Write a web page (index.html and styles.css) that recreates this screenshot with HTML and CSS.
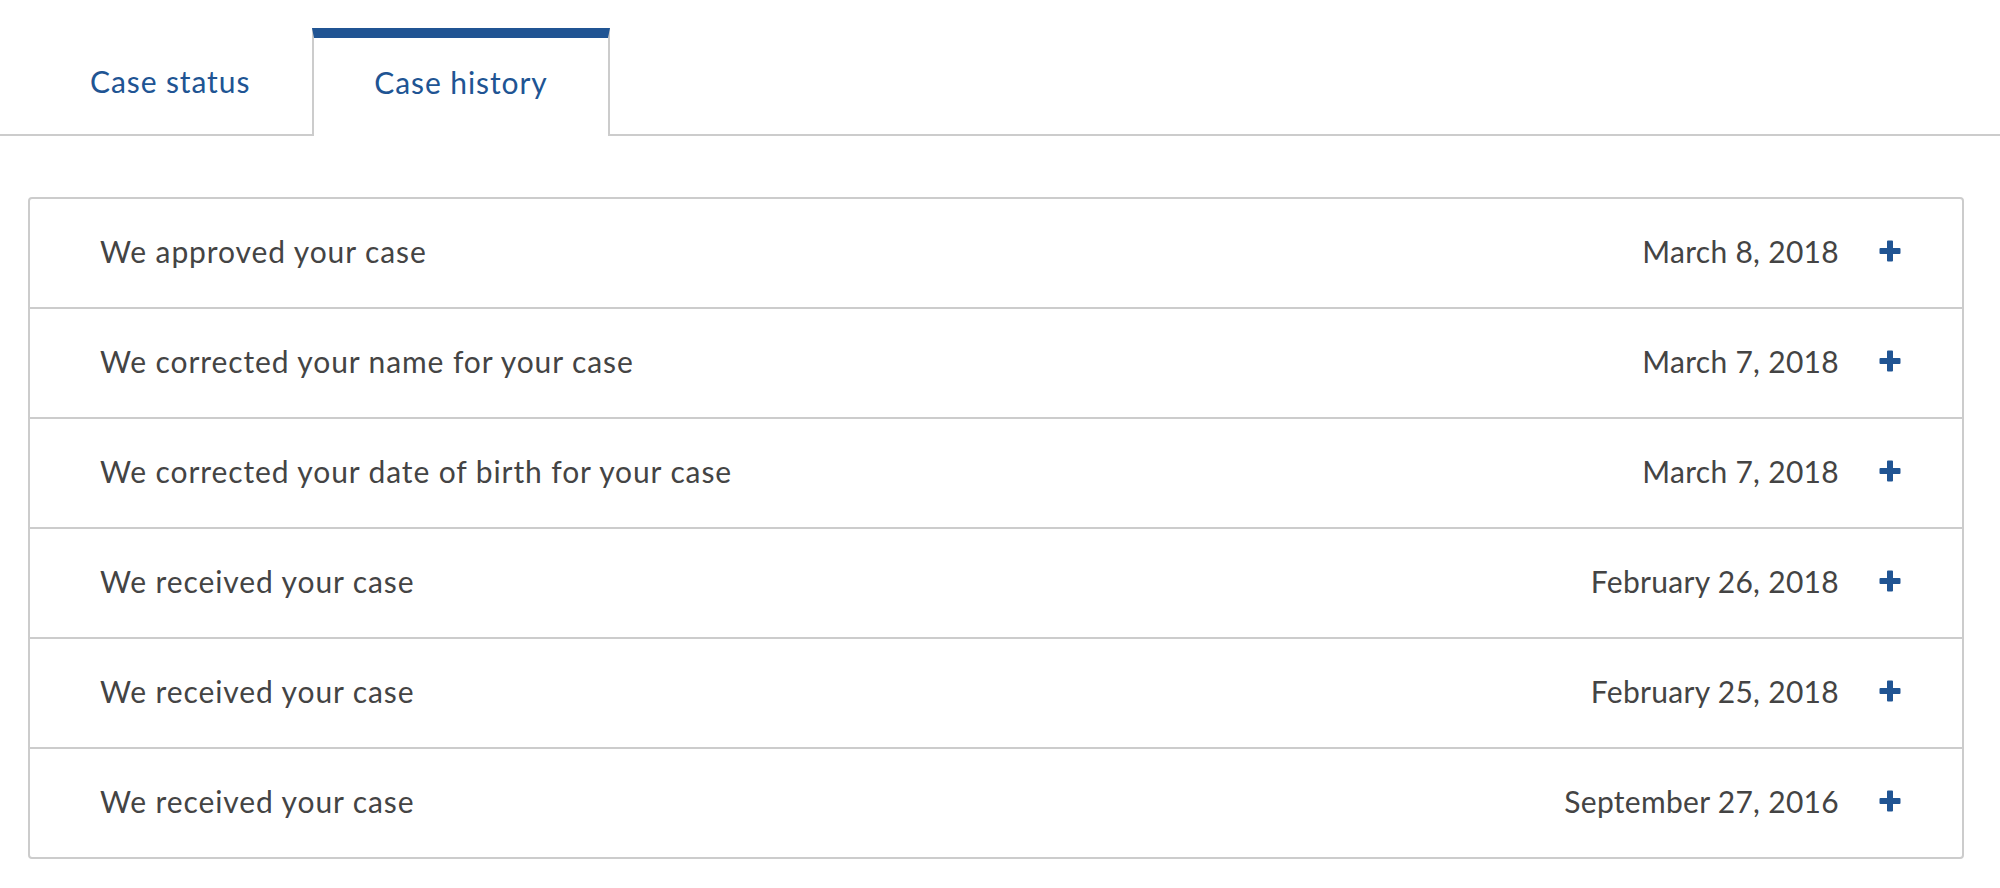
FILE: index.html
```html
<!DOCTYPE html>
<html lang="en">
<head>
<meta charset="utf-8">
<title>Case history</title>
<link rel="stylesheet" href="styles.css">
</head>
<body>
<div class="tabs">
  <div class="tab">Case status</div>
  <div class="tab tab-active">Case history</div>
</div>
<div class="history">
  <div class="row"><span class="title">We approved your case</span><span class="date">March 8, 2018</span><svg class="plus" viewBox="0 0 22 22"><path d="M8 1.5a1 1 0 0 1 1-1h4a1 1 0 0 1 1 1V8h6.5a1 1 0 0 1 1 1v4a1 1 0 0 1-1 1H14v6.5a1 1 0 0 1-1 1H9a1 1 0 0 1-1-1V14H1.5a1 1 0 0 1-1-1V9a1 1 0 0 1 1-1H8z"/></svg></div>
  <div class="row"><span class="title">We corrected your name for your case</span><span class="date">March 7, 2018</span><svg class="plus" viewBox="0 0 22 22"><path d="M8 1.5a1 1 0 0 1 1-1h4a1 1 0 0 1 1 1V8h6.5a1 1 0 0 1 1 1v4a1 1 0 0 1-1 1H14v6.5a1 1 0 0 1-1 1H9a1 1 0 0 1-1-1V14H1.5a1 1 0 0 1-1-1V9a1 1 0 0 1 1-1H8z"/></svg></div>
  <div class="row"><span class="title">We corrected your date of birth for your case</span><span class="date">March 7, 2018</span><svg class="plus" viewBox="0 0 22 22"><path d="M8 1.5a1 1 0 0 1 1-1h4a1 1 0 0 1 1 1V8h6.5a1 1 0 0 1 1 1v4a1 1 0 0 1-1 1H14v6.5a1 1 0 0 1-1 1H9a1 1 0 0 1-1-1V14H1.5a1 1 0 0 1-1-1V9a1 1 0 0 1 1-1H8z"/></svg></div>
  <div class="row"><span class="title">We received your case</span><span class="date">February 26, 2018</span><svg class="plus" viewBox="0 0 22 22"><path d="M8 1.5a1 1 0 0 1 1-1h4a1 1 0 0 1 1 1V8h6.5a1 1 0 0 1 1 1v4a1 1 0 0 1-1 1H14v6.5a1 1 0 0 1-1 1H9a1 1 0 0 1-1-1V14H1.5a1 1 0 0 1-1-1V9a1 1 0 0 1 1-1H8z"/></svg></div>
  <div class="row"><span class="title">We received your case</span><span class="date">February 25, 2018</span><svg class="plus" viewBox="0 0 22 22"><path d="M8 1.5a1 1 0 0 1 1-1h4a1 1 0 0 1 1 1V8h6.5a1 1 0 0 1 1 1v4a1 1 0 0 1-1 1H14v6.5a1 1 0 0 1-1 1H9a1 1 0 0 1-1-1V14H1.5a1 1 0 0 1-1-1V9a1 1 0 0 1 1-1H8z"/></svg></div>
  <div class="row"><span class="title">We received your case</span><span class="date">September 27, 2016</span><svg class="plus" viewBox="0 0 22 22"><path d="M8 1.5a1 1 0 0 1 1-1h4a1 1 0 0 1 1 1V8h6.5a1 1 0 0 1 1 1v4a1 1 0 0 1-1 1H14v6.5a1 1 0 0 1-1 1H9a1 1 0 0 1-1-1V14H1.5a1 1 0 0 1-1-1V9a1 1 0 0 1 1-1H8z"/></svg></div>
</div>
</body>
</html>
```
FILE: styles.css
```css
html, body {
  margin: 0;
  padding: 0;
  background: #ffffff;
}
body {
  font-family: Lato, "Liberation Sans", sans-serif;
  color: #444444;
}
.tabs {
  display: flex;
  align-items: flex-start;
  padding: 28px 0 0 28px;
  border-bottom: 2px solid #cccccc;
}
.tab {
  display: flex;
  align-items: center;
  height: 86px;
  padding: 0 60px 10px;
  border: 2px solid transparent;
  border-top: 10px solid transparent;
  border-bottom: 0;
  font-size: 30px;
  letter-spacing: 0.9px;
  color: #205493;
}
.tab-active {
  height: 88px;
  margin-bottom: -2px;
  background: #ffffff;
  border-color: #cccccc;
  border-top-color: #205493;
}
.history {
  margin: 61px 36px 0 28px;
  border: 2px solid #cccccc;
  border-radius: 4px;
}
.row {
  display: flex;
  align-items: center;
  height: 104px;
  padding: 0 61px 4px 70px;
  font-size: 30px;
  letter-spacing: 0.9px;
}
.row + .row {
  border-top: 2px solid #cccccc;
}
.title {
  flex: 1;
}
.date {
  text-align: right;
  letter-spacing: 0.3px;
}
.plus {
  width: 22px;
  height: 22px;
  margin-left: 40px;
  fill: #205493;
  flex: none;
}
```
